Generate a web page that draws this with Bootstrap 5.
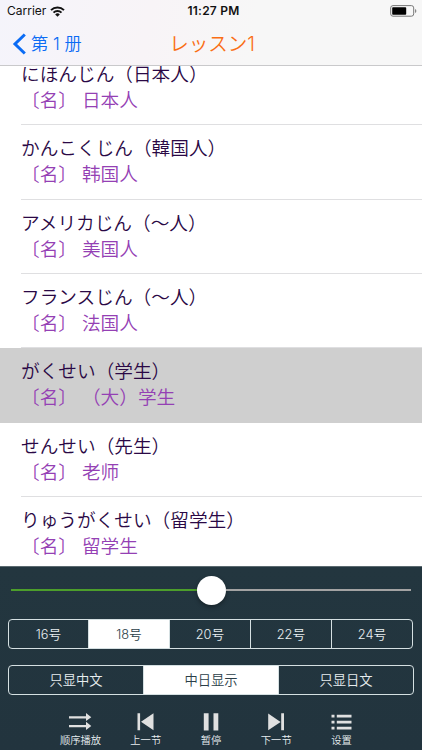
<!DOCTYPE html>
<html lang="ja">
<head>
<meta charset="utf-8">
<meta name="viewport" content="width=device-width, initial-scale=1">
<title>レッスン1</title>
<link href="https://cdn.jsdelivr.net/npm/bootstrap@5.3.0/dist/css/bootstrap.min.css" rel="stylesheet">
<style>
body{font-family:Inter,"Noto Sans CJK SC",sans-serif;background:#fff;height:750px}
.top-area{height:66px;background:linear-gradient(100deg,#f5f4fb,#f8f4f7 35%,#f7f7f7 60%);border-bottom:1px solid #c9c9cb;color:#111}
.status{height:22px;font-size:12px;line-height:22px;padding:0 5px 0 7px}
.status .clock{font-weight:600;letter-spacing:.25px;padding-left:3px}
.status>div{flex:1 1 0}
.nav-line{height:43px;padding:0 10px 0 12px}
.nav-line>div{flex:1 1 0}
.back-link{color:#0b6cf5;font-size:17.2px;line-height:43px;text-decoration:none;font-weight:350}
.lesson{color:#fa6e14;font-size:19.5px;line-height:42px;font-family:Inter,"Noto Sans CJK JP",sans-serif;font-weight:350}
.words{height:500px}
.words-inner{margin-top:-15px}
.word{height:74.35px;padding-left:21px}
.word-body{height:100%;border-bottom:1px solid #dfdfe1;padding-top:9px;white-space:pre}
.word.active-word{background:#cfcfcf}
.word.active-word .word-body{border-color:#cfcfcf}
.jp,.cn{font-size:18.67px;line-height:26px;font-weight:350}
.jp{font-family:"Noto Sans CJK JP",sans-serif;color:#2a0845}
.cn{font-family:"Noto Sans CJK SC",sans-serif;color:#9440b4;word-spacing:.8px}
.panel{height:184px;background:linear-gradient(#23363f,#22343e);border-top:1px solid #5b6a70;color:#e8eef0}
.slider{height:46px;margin:0 11px 1px}
.track{height:2px;background:#a3a3a3}
.track-on{height:2px;background:#4c9e2b}
.thumb{width:29px;height:29px;border-radius:50%;background:#fff;box-shadow:0 2px 4px rgba(0,0,0,.35);flex:none}
.seg{height:30px;border:1px solid #d5e0e2;border-radius:4px;overflow:hidden;font-size:12.8px;line-height:29px;font-weight:350}
.seg>div{flex:1 1 0;text-align:center;border-left:1px solid #d5e0e2}
.seg>div:first-child{border-left:0}
.seg .on{background:#fff;color:#2b3e48}
.seg-size{margin:6px 9px 0 8px}
.seg-size>div:first-child{flex:0 0 79px}
.seg-lang{margin:16px 8px 0 8px;font-size:13.3px}
.tools{padding:17px 48px 0;font-size:10.3px;font-weight:350}
.tools>div{width:65px;text-align:center;line-height:15px}
.tools svg{display:block;margin:0 auto 1px}
</style>
<script src="https://cdn.jsdelivr.net/npm/bootstrap@5.3.0/dist/js/bootstrap.bundle.min.js"></script>
</head>
<body class="d-flex flex-column overflow-hidden m-0">
<header class="top-area flex-shrink-0">
  <div class="status d-flex align-items-center">
    <div class="d-flex align-items-center">Carrier
      <svg class="ms-1" width="15" height="11" viewBox="0 0 15 11" fill="none" stroke="#111" stroke-width="2"><path d="M1 4.1a9.3 9.3 0 0 1 13 0M3.5 6.6a5.8 5.8 0 0 1 8 0"/><path d="M7.5 10.8 5.2 8.5a3.2 3.2 0 0 1 4.6 0z" fill="#111" stroke="none"/></svg>
    </div>
    <span class="clock">11:27 PM</span>
    <div class="d-flex justify-content-end">
      <svg width="27" height="12" viewBox="0 0 27 12"><rect x=".7" y=".6" width="23" height="10.6" rx="2.3" fill="none" stroke="#777"/><rect x="2.2" y="2.2" width="14" height="7.5" rx=".8" fill="#000"/><path d="M25 4v4q1.4-.7 1.4-2T25 4" fill="#888"/></svg>
    </div>
  </div>
  <nav class="nav-line d-flex align-items-center">
    <div><a href="#" class="back-link d-flex align-items-center"><svg class="me-1" width="15" height="22" viewBox="0 0 15 22"><path d="M12.8 1.5 3 11l9.8 9.5" fill="none" stroke="#0b6cf5" stroke-width="3"/></svg><span>第 1 册</span></a></div>
    <span class="lesson">レッスン1</span>
    <div></div>
  </nav>
</header>
<main class="words overflow-hidden flex-shrink-0">
  <div class="words-inner">
    <div class="word"><div class="word-body"><div class="jp">にほんじん（日本人）</div><div class="cn" lang="zh-CN">〔名〕 日本人</div></div></div>
    <div class="word"><div class="word-body"><div class="jp">かんこくじん（韓国人）</div><div class="cn" lang="zh-CN">〔名〕 韩国人</div></div></div>
    <div class="word"><div class="word-body"><div class="jp">アメリカじん（～人）</div><div class="cn" lang="zh-CN">〔名〕 美国人</div></div></div>
    <div class="word"><div class="word-body"><div class="jp">フランスじん（～人）</div><div class="cn" lang="zh-CN">〔名〕 法国人</div></div></div>
    <div class="word active-word"><div class="word-body"><div class="jp">がくせい（学生）</div><div class="cn" lang="zh-CN">〔名〕 （大）学生</div></div></div>
    <div class="word"><div class="word-body"><div class="jp">せんせい（先生）</div><div class="cn" lang="zh-CN">〔名〕 老师</div></div></div>
    <div class="word"><div class="word-body"><div class="jp">りゅうがくせい（留学生）</div><div class="cn" lang="zh-CN">〔名〕 留学生</div></div></div>
  </div>
</main>
<footer class="panel flex-shrink-0" lang="zh-CN">
  <div class="slider d-flex align-items-center"><div class="track-on flex-fill"></div><div class="thumb"></div><div class="track flex-fill"></div></div>
  <div class="seg seg-size d-flex"><div>16号</div><div class="on">18号</div><div>20号</div><div>22号</div><div>24号</div></div>
  <div class="seg seg-lang d-flex"><div>只显中文</div><div class="on">中日显示</div><div>只显日文</div></div>
  <div class="tools d-flex justify-content-between">
    <div><svg width="24" height="20" viewBox="0 0 24 20"><path d="M0 4.3h17V1l5.3 4.3L17 9V6.4H0zM0 13.1h17V9.8l5.3 4.3-5.3 3.8v-2.6H0z" fill="#e0e0e0"/></svg>顺序播放</div>
    <div><svg width="24" height="20" viewBox="0 0 24 20"><path d="M3.5 1.2h2.6v17H3.5zM19.5 1.2v17L7 9.7z" fill="#e0e0e0"/></svg>上一节</div>
    <div><svg width="24" height="20" viewBox="0 0 24 20"><path d="M4.8 1.2h4.8v17.3H4.8zM14.5 1.2h4.8v17.3h-4.8z" fill="#e0e0e0"/></svg>暂停</div>
    <div><svg width="24" height="20" viewBox="0 0 24 20"><path d="M4.2 1.5v16.8l12.4-8.4zM17.2 1.2h2.8v17h-2.8z" fill="#e0e0e0"/></svg>下一节</div>
    <div><svg width="24" height="20" viewBox="0 0 24 20"><path d="M1.5 2.7h3v2.8h-3zM6.8 2.7H21.5v2.8H6.8zM1.5 8.7h3v2.8h-3zM6.8 8.7H21.5v2.8H6.8zM1.5 14.7h3v2.8h-3zM6.8 14.7H21.5v2.8H6.8z" fill="#e0e0e0"/></svg>设置</div>
  </div>
</footer>
</body>
</html>
